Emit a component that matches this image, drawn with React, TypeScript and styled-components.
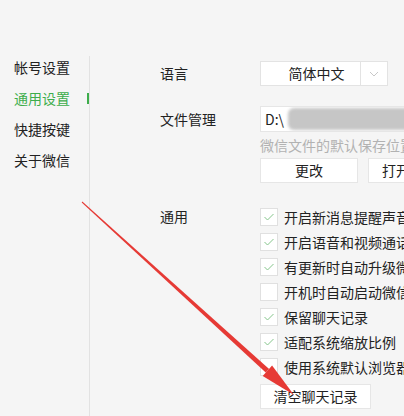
import React from "react";
import styled, { createGlobalStyle } from "styled-components";

const GlobalStyle = createGlobalStyle`
    html, body {
        margin: 0;
        padding: 0;
        background: #f5f5f5;
    }
    * {
        box-sizing: border-box;
    }
`

const Window = styled.div`
    position: relative;
    width: 404px;
    height: 416px;
    overflow: hidden;
    display: flex;
    background: #f5f5f5;
    font-family: "Noto Sans CJK SC", "Noto Sans", sans-serif;
    font-size: 14px;
    color: #222;
`
const Sidebar = styled.div`
    width: 90px;
    flex-shrink: 0;
    margin-top: 56px;
    border-right: 1px solid #e2e2e2;
`
const NavList = styled.div`
    margin-top: -4px;
`
const NavItem = styled.div<{ $active?: boolean }>`
    position: relative;
    height: 31px;
    line-height: 31px;
    padding-left: 14px;
    color: ${(p) => (p.$active ? "#3dad4b" : "#222")};
    white-space: nowrap;
`
const ActiveMark = styled.span`
    position: absolute;
    right: 0;
    top: 10px;
    width: 2px;
    height: 11px;
    background: #3dad4b;
`
const Content = styled.div`
    flex: 1;
    padding: 61px 0 0 70px;
    white-space: nowrap;
`
const Row = styled.div<{ $gap?: number }>`
    display: grid;
    grid-template-columns: 100px max-content;
    margin-bottom: ${(p) => p.$gap ?? 0}px;
`
const Label = styled.div<{ $h?: number }>`
    height: ${(p) => p.$h ?? 25}px;
    line-height: ${(p) => p.$h ?? 25}px;
`
const Column = styled.div`
    display: flex;
    flex-direction: column;
`
const Select = styled.div`
    display: flex;
    width: 128px;
    height: 25px;
    background: #fff;
    border: 1px solid #e3e3e3;
`
const SelectValue = styled.div`
    width: 100px;
    text-align: center;
    line-height: 23px;
    padding-left: 12px;
    border-right: 1px solid #e3e3e3;
`
const SelectArrow = styled.div`
    flex: 1;
    display: flex;
    align-items: center;
    justify-content: center;
`
const PathBox = styled.div`
    position: relative;
    width: 220px;
    height: 26px;
    line-height: 24px;
    padding-left: 4px;
    background: #fff;
    border: 1px solid #e6e6e6;
    overflow: hidden;
`
const Blur = styled.span`
    position: absolute;
    left: 27px;
    top: 1px;
    width: 190px;
    height: 22px;
    border-radius: 6px;
    background: #c6c6c6;
    filter: blur(1.5px);
`
const Hint = styled.div`
    color: #b2b2b2;
    height: 26px;
    line-height: 26px;
`
const ButtonRow = styled.div`
    display: flex;
    gap: 10px;
`
const Button = styled.div<{ $w?: number }>`
    width: ${(p) => p.$w ?? 98}px;
    height: 25px;
    line-height: 23px;
    text-align: center;
    background: #fff;
    border: 1px solid #e6e6e6;
    flex-shrink: 0;
`
const CheckRow = styled.div`
    display: flex;
    align-items: center;
    height: 25px;
    gap: 6px;
`
const Box = styled.div`
    width: 18px;
    height: 18px;
    background: #fff;
    border: 1px solid #e0e0e0;
    display: flex;
    align-items: center;
    justify-content: center;
    flex-shrink: 0;
`
const ClearButton = styled(Button)`
    margin-top: 5px;
`
const Overlay = styled.svg`
    position: absolute;
    left: 0;
    top: 0;
    pointer-events: none;
`

const options = [
    { text: "开启新消息提醒声音", on: true },
    { text: "开启语音和视频通话提醒", on: true },
    { text: "有更新时自动升级微信", on: true },
    { text: "开机时自动启动微信", on: false },
    { text: "保留聊天记录", on: true },
    { text: "适配系统缩放比例", on: true },
    { text: "使用系统默认浏览器打开网页", on: false },
];

const Check = ({ on }: { on: boolean }) => (
    <Box>
        {on && (
            <svg width="12" height="10" viewBox="0 0 12 10">
                <polyline points="1.5,5 4.5,8 10.5,2" fill="none" stroke="#86c68c" strokeWidth="1" />
            </svg>
        )}
    </Box>
);

// red arrow drawn on top of the screenshot
const Arrow = () => {
    const sx = 82, sy = 202, tx = 294, ty = 395;
    const len = Math.hypot(tx - sx, ty - sy);
    const ux = (tx - sx) / len, uy = (ty - sy) / len;
    const nx = -uy, ny = ux;
    const bx = tx - 36 * ux, by = ty - 36 * uy;
    const pt = (x: number, y: number) => `${x.toFixed(1)},${y.toFixed(1)}`;
    const shaft = [
        pt(sx + 0.5 * nx, sy + 0.5 * ny),
        pt(bx + 2.5 * nx, by + 2.5 * ny),
        pt(bx - 2.5 * nx, by - 2.5 * ny),
        pt(sx - 0.5 * nx, sy - 0.5 * ny),
    ].join(" ");
    const head = [
        pt(bx + 7 * nx, by + 7 * ny),
        pt(tx, ty),
        pt(bx - 7 * nx, by - 7 * ny),
    ].join(" ");
    return (
        <Overlay width="404" height="416" viewBox="0 0 404 416">
            <polygon points={shaft} fill="#e63a35" />
            <polygon points={head} fill="#e63a35" />
        </Overlay>
    );
};

const App = () => {
    return (
        <Window>
            <GlobalStyle />
            <Sidebar>
                <NavList>
                    <NavItem>帐号设置</NavItem>
                    <NavItem $active>
                        通用设置
                        <ActiveMark />
                    </NavItem>
                    <NavItem>快捷按键</NavItem>
                    <NavItem>关于微信</NavItem>
                </NavList>
            </Sidebar>
            <Content>
                <Row $gap={20}>
                    <Label>语言</Label>
                    <Select>
                        <SelectValue>简体中文</SelectValue>
                        <SelectArrow>
                            <svg width="10" height="6" viewBox="0 0 10 6">
                                <polyline points="1,1 5,5 9,1" fill="none" stroke="#c8c8c8" strokeWidth="1" />
                            </svg>
                        </SelectArrow>
                    </Select>
                </Row>
                <Row $gap={21}>
                    <Label $h={26}>文件管理</Label>
                    <Column>
                        <PathBox>
                            D:\
                            <Blur />
                        </PathBox>
                        <Hint>微信文件的默认保存位置</Hint>
                        <ButtonRow>
                            <Button>更改</Button>
                            <Button>打开文件夹</Button>
                        </ButtonRow>
                    </Column>
                </Row>
                <Row>
                    <Label>通用</Label>
                    <Column>
                        {options.map((o) => (
                            <CheckRow key={o.text}>
                                <Check on={o.on} />
                                {o.text}
                            </CheckRow>
                        ))}
                        <ClearButton $w={111}>清空聊天记录</ClearButton>
                    </Column>
                </Row>
            </Content>
            <Arrow />
        </Window>
    );
};

export default App;
